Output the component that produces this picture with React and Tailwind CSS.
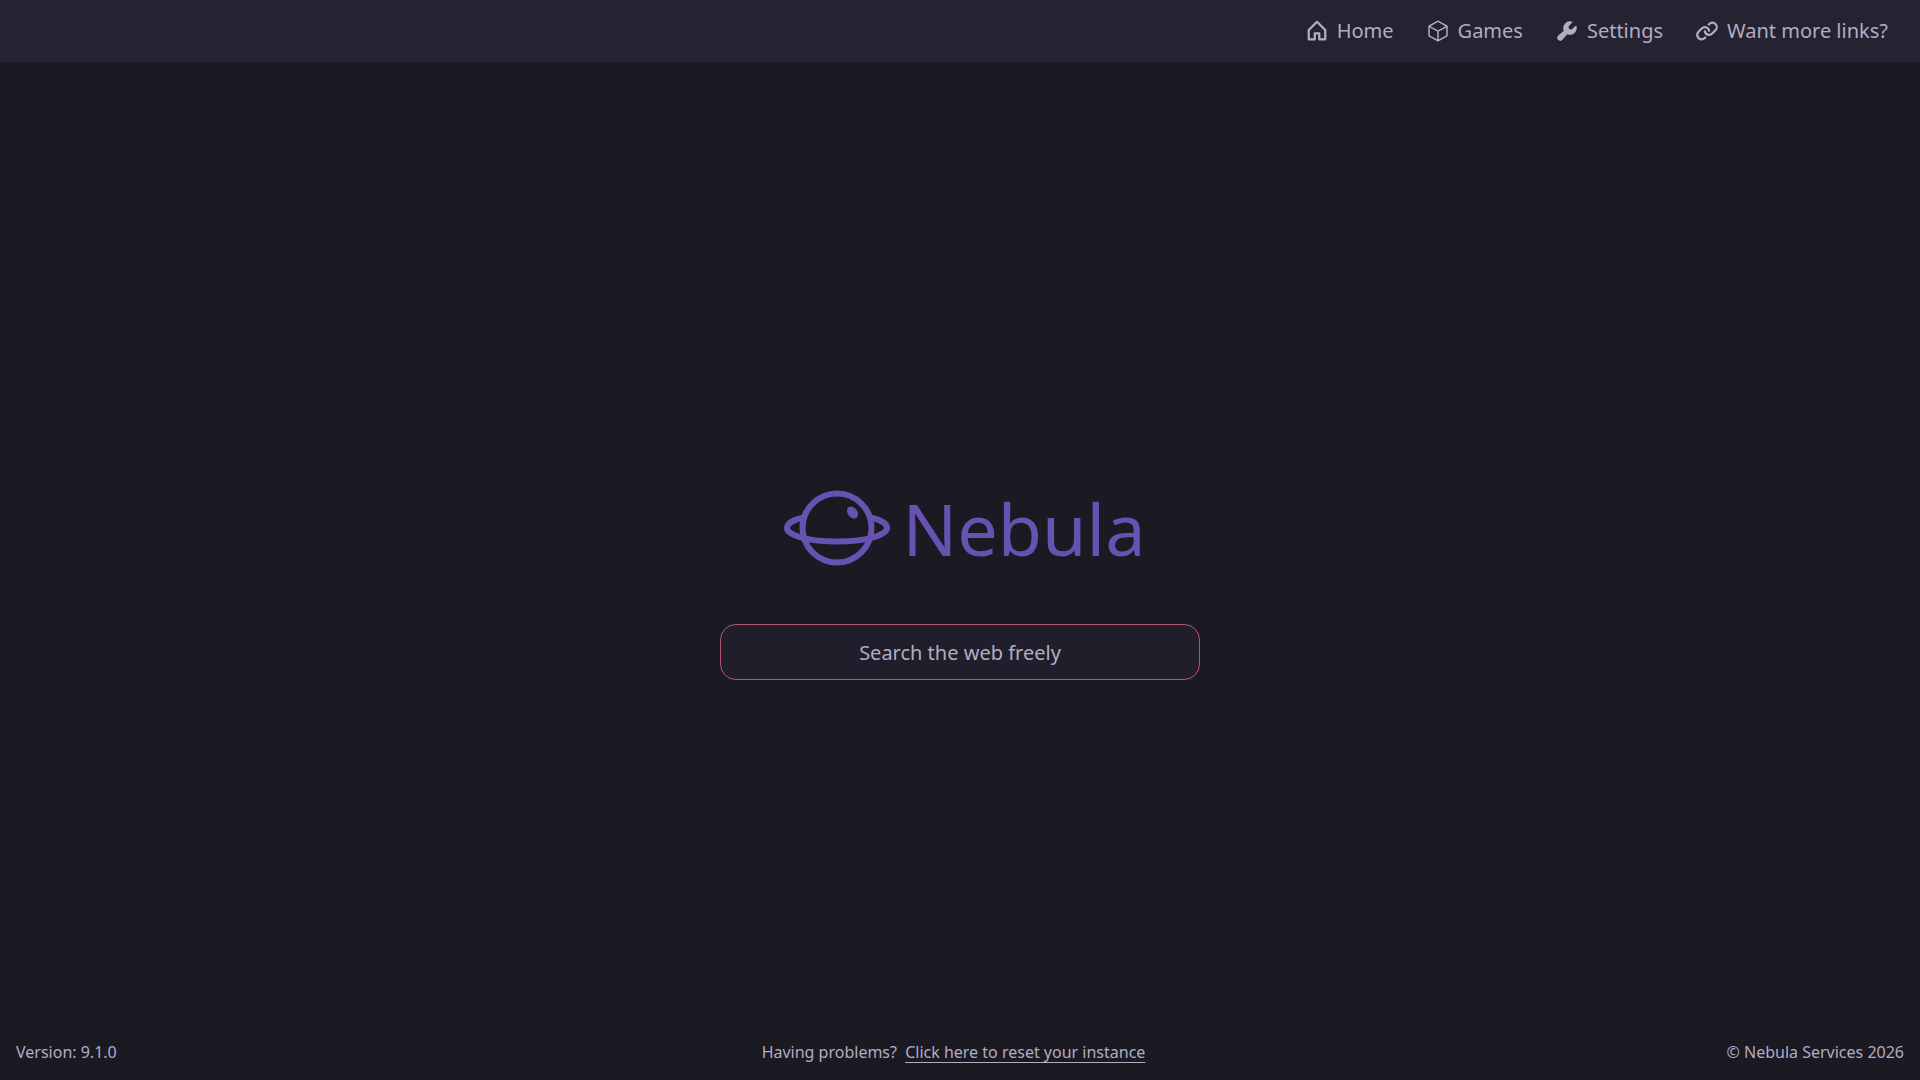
import { PiHouseBold, PiCube, PiWrenchFill, PiLinkBold } from 'react-icons/pi'

const navLinks = [
  { label: 'Home', href: '#home', icon: PiHouseBold },
  { label: 'Games', href: '#games', icon: PiCube },
  { label: 'Settings', href: '#settings', icon: PiWrenchFill },
  { label: 'Want more links?', href: '#links', icon: PiLinkBold },
]

function Logo() {
  return (
    <svg
      viewBox="-9 0 117 76"
      className="w-[117px] h-[76px] shrink-0"
      fill="none"
      stroke="currentColor"
      strokeWidth="6"
      aria-hidden="true"
    >
      <circle cx="54" cy="38" r="34.5" />
      {/* Ring, open behind the planet */}
      <path d="M20 27.6C10.5 29.6 4 33.5 4 38C4 45.5 26.4 51.5 54 51.5C81.6 51.5 104 45.5 104 38C104 33.5 97.5 29.6 88 27.6" />
      {/* Highlight */}
      <ellipse
        cx="69.5"
        cy="22.5"
        rx="4.8"
        ry="6.6"
        transform="rotate(-38 69.5 22.5)"
        fill="currentColor"
        stroke="none"
      />
    </svg>
  )
}

function Navbar() {
  return (
    <nav className="flex items-center justify-end gap-8 h-[62px] px-8 bg-[#252231] text-xl">
      {navLinks.map(({ label, href, icon: Icon }) => (
        <a key={label} href={href} className="flex items-center gap-2 hover:text-white transition-colors">
          <Icon className="w-6 h-6" />
          {label}
        </a>
      ))}
    </nav>
  )
}

function Footer() {
  return (
    <footer className="flex items-center p-4">
      <p className="flex-1">Version: 9.1.0</p>
      <p className="pr-[13px]">
        Having problems?{' '}
        <a
          href="#reset"
          className="ml-1 underline decoration-1 underline-offset-4 [text-decoration-skip-ink:none]"
        >
          Click here to reset your instance
        </a>
      </p>
      <p className="flex-1 text-right">© Nebula Services 2026</p>
    </footer>
  )
}

export default function App() {
  return (
    <div className="min-h-screen flex flex-col bg-[#1b1a22] text-[#b1adc2] font-['Noto_Sans',sans-serif]">
      <Navbar />
      <main className="flex-1 flex flex-col items-center justify-center gap-[58px] pt-[84px] px-4">
        <h1 className="flex items-center gap-[11px] text-7xl leading-none text-[#6652b1]">
          <Logo />
          Nebula
        </h1>
        <input
          type="text"
          aria-label="Search the web freely"
          placeholder="Search the web freely"
          className="w-full max-w-[480px] h-14 px-4 rounded-2xl border border-[#bb5672] bg-[#201e2a] text-xl text-center placeholder:text-[#b1adc2] outline-none"
        />
      </main>
      <Footer />
    </div>
  )
}
